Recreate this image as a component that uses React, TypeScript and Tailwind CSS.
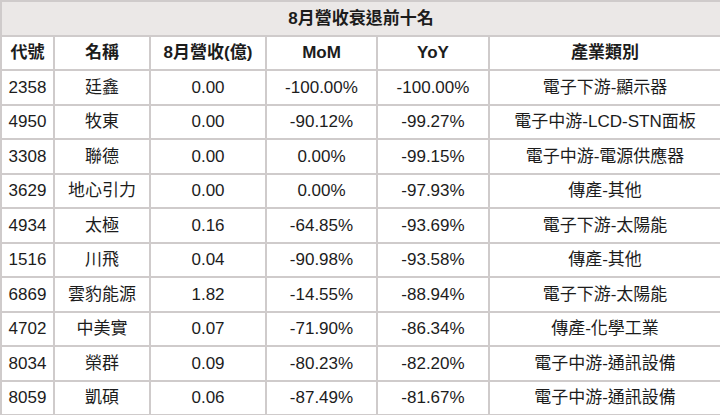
import React from "react";

const rows = [
  ["2358", "廷鑫", "0.00", "-100.00%", "-100.00%", "電子下游-顯示器"],
  ["4950", "牧東", "0.00", "-90.12%", "-99.27%", "電子中游-LCD-STN面板"],
  ["3308", "聯德", "0.00", "0.00%", "-99.15%", "電子中游-電源供應器"],
  ["3629", "地心引力", "0.00", "0.00%", "-97.93%", "傳產-其他"],
  ["4934", "太極", "0.16", "-64.85%", "-93.69%", "電子下游-太陽能"],
  ["1516", "川飛", "0.04", "-90.98%", "-93.58%", "傳產-其他"],
  ["6869", "雲豹能源", "1.82", "-14.55%", "-88.94%", "電子下游-太陽能"],
  ["4702", "中美實", "0.07", "-71.90%", "-86.34%", "傳產-化學工業"],
  ["8034", "榮群", "0.09", "-80.23%", "-82.20%", "電子中游-通訊設備"],
  ["8059", "凱碩", "0.06", "-87.49%", "-81.67%", "電子中游-通訊設備"],
];

const headers = ["代號", "名稱", "8月營收(億)", "MoM", "YoY", "產業類別"];
const widths = ["w-[53px]", "w-[96px]", "w-[116px]", "w-[111px]", "w-[112px]", "w-[232px]"];

export default function App() {
  return (
    <div
      className="w-[720px] h-[415px] bg-white text-[#1c1c1c] text-[17px] overflow-hidden"
      style={{ fontFamily: '"Liberation Sans", "Noto Sans CJK TC", Arial, sans-serif' }}
    >
      <table className="w-[720px] h-[415px] border-collapse border-2 border-[#cfcbcb] table-fixed">
        <colgroup>
          {widths.map((w, i) => (
            <col key={i} className={w} />
          ))}
        </colgroup>
        <thead>
          <tr className="h-[34.5px] bg-[#ebe8e7]">
            <th colSpan={6} className="border-2 border-[#cfcbcb] font-bold text-center p-0">
              8月營收衰退前十名
            </th>
          </tr>
          <tr className="h-[34.5px]">
            {headers.map((h) => (
              <th key={h} className="border-2 border-[#cfcbcb] font-bold text-center p-0">
                {h}
              </th>
            ))}
          </tr>
        </thead>
        <tbody>
          {rows.map((r) => (
            <tr key={r[0]} className="h-[34.5px]">
              {r.map((c, i) => (
                <td key={i} className="border-2 border-[#cfcbcb] text-center p-0 whitespace-nowrap">
                  {c}
                </td>
              ))}
            </tr>
          ))}
        </tbody>
      </table>
    </div>
  );
}
